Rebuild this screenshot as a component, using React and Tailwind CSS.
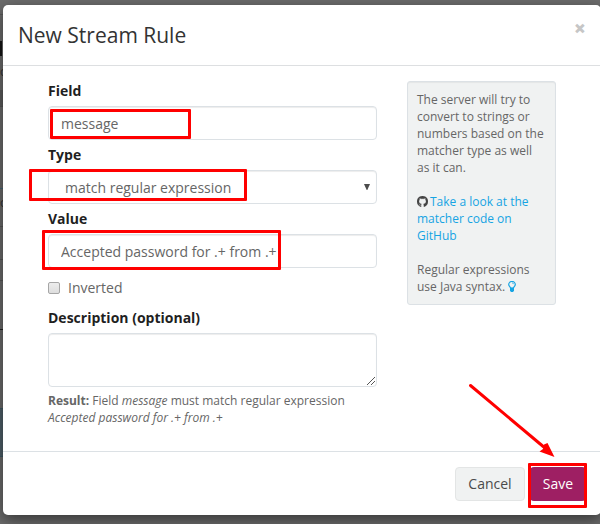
import React from "react";

const inputClass =
  "block h-[34px] w-full rounded-[4px] border border-[#dce1e5] bg-white px-3 text-[14px] leading-[20px] text-[#666] shadow-[inset_0_1px_1px_rgba(0,0,0,0.075)] outline-none";

function Label({ children }) {
  return (
    <div className="mb-[5px] h-5 text-[14px] leading-[20px] font-bold text-[#1f1f1f]">
      {children}
    </div>
  );
}

function GithubIcon() {
  return (
    <svg className="mr-[2px] inline-block h-[11px] w-[11px] align-[-1px]" viewBox="0 0 1536 1536">
      <path
        fill="#444"
        stroke="#444"
        strokeWidth="40"
        d="M768 0q209 0 385.500 103t279.500 279.500 103 385.500q0 251-146.500 451.500t-378.500 277.500q-27 5-40-7t-13-30q0-3 .5-76.500t.5-134.500q0-97-52-142 57-6 102.500-18t94-39 81-66.500 53-105 20.500-150.500q0-119-79-206 37-91-8-204-28-9-81 11t-92 44l-38 24q-93-26-192-26t-192 26q-16-11-42.500-27t-83.500-38.500-85-13.500q-45 113-8 204-79 87-79 206 0 85 20.500 150t52.500 105 80.500 67 94 39 102.500 18q-39 36-49 103-21 10-45 15t-57 5-65.500-21.500-55.500-62.500q-19-32-48.500-52t-49.500-24l-20-3q-21 0-29 4.500t-5 11.500 9 14 13 12l7 5q22 10 43.500 38t31.500 51l10 23q13 38 44 61.500t67 30 69.500 7 55.500-3.500l23-4q0 38 .5 88.500t.5 54.500q0 18-13 30t-40 7q-232-77-378.500-277.500t-146.500-451.500q0-209 103-385.500t279.500-279.500 385.500-103z"
      />
    </svg>
  );
}

function BulbIcon() {
  return (
    <svg className="inline-block h-[11px] w-[8px] align-[-1px]" viewBox="0 0 8 11">
      <path d="M2.600 7.200C2.500 5.900.7 5.300.7 3.600a3.300 3.100 0 0 1 6.600 0C7.300 5.300 5.500 5.900 5.400 7.200Z" fill="none" stroke="#16a4e3" strokeWidth="1.200" />
      <path d="M4 1.900q1.500 0 1.700 1.300" fill="none" stroke="#16a4e3" strokeWidth=".7" />
      <path d="M2 6.800h4v2.900L5 11H3L2 9.700Z" fill="#16a4e3" />
    </svg>
  );
}

/* Sliver of the dimmed page that stays visible left of the dialog */
function Backdrop() {
  return (
    <div className="flex h-[524px] w-[12px] shrink-0 flex-col text-[12px] leading-[17px] text-[#333]">
      <div className="h-[15px] border-b border-[#5a5a5a]" />
      <div className="mt-[26px] h-[15px] w-[2px] bg-[#151515]" />
      <div className="mt-[7px] h-[17px]">o</div>
      <div className="mt-[10px] h-[17px] border-b border-[#555] bg-[#5d5d5d]" />
      <div className="h-[82px] border-b border-[#456676]" />
      <div className="mt-[5px] h-[17px]">o</div>
      <div className="h-[16px] border-b border-[#585858]" />
      <div className="h-[33px] border-b border-[#585858]" />
      <div className="h-[21px] border-b border-[#585858]" />
      <div className="h-[49px] border-b border-[#222]" />
      <div className="mt-[78px] h-[49px] border-y border-[#3f5964] bg-[#4f6069]" />
    </div>
  );
}

export default function App() {
  return (
    <div className="relative flex h-[524px] w-[600px] items-start overflow-hidden bg-[#6c6c6c] font-['Open_Sans','Noto_Sans',sans-serif] text-[#666]">
      <Backdrop />

      <div className="relative mt-[5px] -ml-[9px] flex h-[510px] w-[598px] shrink-0 flex-col rounded-[5px] bg-white shadow-[0_5px_15px_rgba(0,0,0,0.5)]">
        <header className="flex h-[61px] shrink-0 items-start justify-between border-b border-[#dddfe1] px-[15px] pt-[15px]">
          <h4 className="text-[21px] leading-[30px] font-normal text-[#333]">New Stream Rule</h4>
          <span className="mt-[-2px] text-[21px] leading-[21px] font-extrabold text-[#c6c6c6]">×</span>
        </header>

        <main className="flex h-[385px] shrink-0 items-start gap-[30px] pt-[15px] pl-[45px]">
          <form className="flex w-[329px] flex-col">
            <div className="mb-[5px]">
              <Label>Field</Label>
              <input className={inputClass} defaultValue="message" />
            </div>
            <div className="mb-[5px]">
              <Label>Type</Label>
              <div className="flex h-[34px] items-center justify-between rounded-[4px] border border-[#dce1e5] bg-white pt-[2px] pr-[6px] pl-4 text-[14px] leading-[20px] shadow-[inset_0_1px_1px_rgba(0,0,0,0.075)]">
                <span>match regular expression</span>
                <svg className="mb-[3px] h-[6px] w-[6px]" viewBox="0 0 6 6">
                  <path d="M0 0h6L3.300 6H2.700Z" fill="#4c4c4c" />
                </svg>
              </div>
            </div>
            <div>
              <Label>Value</Label>
              <input className={inputClass} defaultValue="Accepted password for .+ from .+" />
            </div>
            <div className="my-[10px] flex h-5 items-center gap-2 text-[14px] leading-[20px]">
              <span className="h-3 w-3 rounded-[2px] border border-[#a6a6a6] bg-linear-to-b from-[#ededed] to-[#dedede]" />
              Inverted
            </div>
            <Label>Description (optional)</Label>
            <div className="flex h-[54px] items-end justify-end rounded-[4px] border border-[#dce1e5] p-[1px] shadow-[inset_0_1px_1px_rgba(0,0,0,0.075)]">
              <svg className="h-[8px] w-[8px]" viewBox="0 0 8 8" stroke="#444" strokeWidth="0.900">
                <path d="M0 8L8 0M4 8l4-4" />
              </svg>
            </div>
            <div className="mt-[5px] text-[12px] leading-[17px]">
              <div><b>Result:</b> Field <i>message</i> must match regular expression</div>
              <i>Accepted password for .+ from .+</i>
            </div>
          </form>

          <aside className="flex h-[224px] w-[149px] flex-col gap-[17px] rounded-[3px] border border-[#dce1e5] bg-[#f0f2f2] p-[9px] text-[12px] leading-[17px] whitespace-nowrap shadow-[inset_0_1px_1px_rgba(0,0,0,0.05)]">
            <p>The server will try to<br />convert to strings or<br />numbers based on the<br />matcher type as well<br />as it can.</p>
            <p className="text-[#16a4e3]"><GithubIcon />Take a look at the<br />matcher code on<br />GitHub</p>
            <p>Regular expressions<br />use Java syntax. <BulbIcon /></p>
          </aside>
        </main>

        <footer className="flex h-[64px] shrink-0 justify-end gap-[5px] border-t border-[#dce1e5] pt-[15px] pr-[15px] text-[14px] leading-[20px]">
          <button className="h-[34px] w-[70px] rounded-[4px] border border-[#e3e5e5] bg-[#f0f2f2] text-[#4b4b4b]">Cancel</button>
          <button className="h-[34px] w-[56px] rounded-[4px] bg-[#9e1f63] text-white">Save</button>
        </footer>
      </div>

      {/* Highlight annotations over the dialog */}
      <div className="absolute top-[109px] left-[50px] h-[30px] w-[141px] rounded-[1px] border-3 border-[#f00]" />
      <div className="absolute top-[169px] left-[29px] h-[32px] w-[218px] rounded-[1px] border-3 border-[#f00]" />
      <div className="absolute top-[230px] left-[42px] h-[40px] w-[239px] rounded-[1px] border-3 border-[#f00]" />
      <div className="absolute top-[463px] left-[528px] h-[45px] w-[59px] rounded-[1px] border-3 border-[#f00]" />
      <svg className="absolute top-[380px] left-[465px] h-[80px] w-[95px]" viewBox="0 0 95 80">
        <path d="M5.500 5.500L80 68" stroke="#f00" strokeWidth="3" strokeLinecap="round" />
        <path d="M89.500 77L74.500 71.500L78 69L79 64.500L82.500 63Z" fill="#f00" />
      </svg>
    </div>
  );
}
